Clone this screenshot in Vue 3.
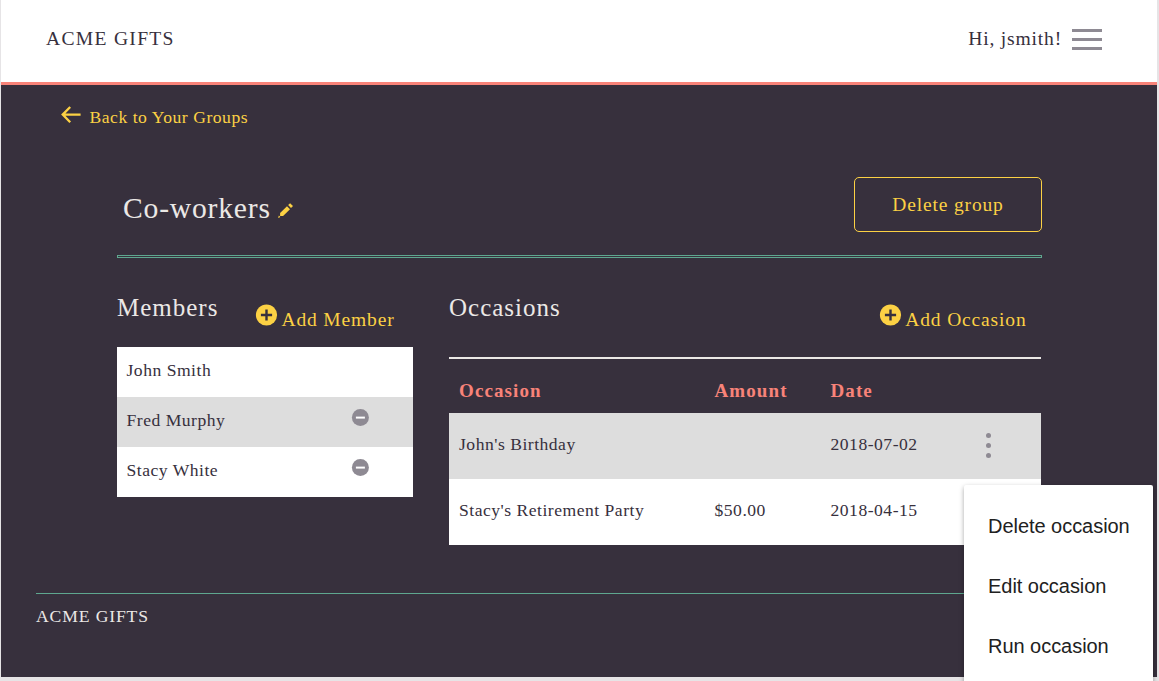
<script setup>
const members = [
  { name: 'John Smith', removable: false },
  { name: 'Fred Murphy', removable: true },
  { name: 'Stacy White', removable: true },
]
const occasions = [
  { name: "John's Birthday", amount: '', date: '2018-07-02' },
  { name: "Stacy's Retirement Party", amount: '$50.00', date: '2018-04-15' },
]
const actions = ['Delete occasion', 'Edit occasion', 'Run occasion']
</script>

<template>
  <div class="page">
    <header class="topbar">
      <span class="brand">ACME GIFTS</span>
      <div class="user">
        <span>Hi, jsmith!</span>
        <div class="burger"><i></i><i></i><i></i></div>
      </div>
    </header>

    <main class="main">
      <a class="back">
        <svg width="20" height="18" viewBox="0 0 20 18"><path d="M19.6 8.6H2M9.2 1 1.7 8.6l7.5 7.6" fill="none" stroke="currentColor" stroke-width="2.3" /></svg>
        <span>Back to Your Groups</span>
      </a>

      <div class="content">
        <div class="title-row">
          <h1>Co-workers</h1>
          <svg class="pencil" width="15" height="15" viewBox="0 0 15 15" fill="currentColor">
            <path d="M2.1 10 9 3.2 12 6.2 5.1 13H2.1ZM10.1 2.1 12.1.2 15 3.1 13 5ZM0 15 .9 12.6 2.4 14.1Z" />
          </svg>
          <button class="delete">Delete group</button>
        </div>
        <div class="double-rule"></div>

        <div class="columns">
          <section class="members">
            <div class="section-head">
              <h2>Members</h2>
              <a class="add">
                <svg width="22" height="22" viewBox="0 0 22 22"><circle cx="10.5" cy="11" r="10.6" fill="currentColor" /><path d="M10.5 5.4v11.2M4.9 11h11.2" stroke="#37303d" stroke-width="2.4" /></svg>
                <span>Add Member</span>
              </a>
            </div>
            <ul>
              <li v-for="m in members" :key="m.name">
                <span>{{ m.name }}</span>
                <svg v-if="m.removable" width="18" height="18" viewBox="0 0 18 18"><circle cx="9.4" cy="8.6" r="8.5" fill="#8e8a93" /><path d="M4.9 8.6h9" stroke="#fff" stroke-width="2" /></svg>
              </li>
            </ul>
          </section>

          <section class="occasions">
            <div class="section-head">
              <h2>Occasions</h2>
              <a class="add">
                <svg width="22" height="22" viewBox="0 0 22 22"><circle cx="10.5" cy="11" r="10.6" fill="currentColor" /><path d="M10.5 5.4v11.2M4.9 11h11.2" stroke="#37303d" stroke-width="2.4" /></svg>
                <span>Add Occasion</span>
              </a>
            </div>
            <div class="table">
              <div class="row head"><span>Occasion</span><span>Amount</span><span>Date</span></div>
              <div v-for="o in occasions" :key="o.name" class="row">
                <span>{{ o.name }}</span>
                <span>{{ o.amount }}</span>
                <span>{{ o.date }}</span>
                <div class="dots"><i></i><i></i><i></i></div>
              </div>
            </div>
          </section>
        </div>
      </div>

      <footer>ACME GIFTS</footer>
    </main>

    <div class="menu">
      <a v-for="a in actions" :key="a">{{ a }}</a>
    </div>
  </div>
</template>

<style>
body { margin: 0; background: #e6e4e6; overflow: hidden; }
</style>

<style scoped>
* { box-sizing: border-box; }
h1, h2, ul { margin: 0; padding: 0; font-weight: 400; list-style: none; }
svg, i { display: block; flex: none; }
svg { overflow: visible; }
span, a, h1, h2 { white-space: nowrap; }
.page {
  position: relative;
  height: 681px;
  padding: 0 2px 4px 1px;
  overflow: hidden;
  display: flex;
  flex-direction: column;
  font-family: "Liberation Serif", "Times New Roman", serif;
  font-size: 17.6px;
  letter-spacing: 0.5px;
  color: #37303d;
}
.topbar {
  height: 85px;
  flex: none;
  display: flex;
  justify-content: space-between;
  padding: 27px 55px 0 45px;
  background: #fff;
  border-bottom: 3px solid #f88379;
  font-size: 19.6px;
  line-height: 24px;
}
.brand { letter-spacing: 1.28px; }
.user { display: flex; gap: 10px; letter-spacing: 0.8px; }
.burger { width: 30px; padding-top: 1.5px; display: flex; flex-direction: column; gap: 6px; }
.burger i { height: 3px; background: #8e8a93; }
.main { flex: 1; background: #37303d; display: flex; flex-direction: column; }
.back { display: flex; gap: 8.5px; padding: 21px 0 0 60px; height: 92px; color: #fcd144; line-height: 22px; letter-spacing: 0.53px; }
.content { width: 925px; margin-left: 116px; height: 416px; }
.title-row { display: flex; height: 78px; padding-left: 6px; }
h1 { width: 148px; font-size: 29.6px; line-height: 34px; letter-spacing: 0.8px; padding-top: 14px; color: #ebe8e6; }
.pencil { margin: 26px 0 0 7px; color: #fcd144; }
.delete {
  margin-left: auto;
  width: 188px;
  height: 55px;
  padding: 0;
  border: 1px solid #fcd144;
  border-radius: 5px;
  background: none;
  color: #fcd144;
  font: inherit;
  font-size: 19.5px;
  letter-spacing: 0.85px;
}
.double-rule { height: 3px; border: 1px solid #5ea78f; }
.columns { display: flex; gap: 36px; padding-top: 35px; }
.members { width: 296px; }
.occasions { width: 592px; }
.section-head { display: flex; justify-content: space-between; height: 54px; }
h2 { font-size: 25px; line-height: 29px; letter-spacing: 1px; color: #ebe8e6; }
.add { display: flex; gap: 3px; padding-top: 11px; color: #fcd144; font-size: 19.5px; line-height: 31px; letter-spacing: 0.85px; }
.members .add { margin-right: 18.5px; }
.occasions .add { margin-right: 14.5px; }
li {
  display: flex;
  justify-content: space-between;
  height: 50px;
  padding: 12px 44px 0 9.5px;
  line-height: 22px;
  background: #fff;
}
li:nth-child(even) { background: #ddd; }
.table { margin-top: 10px; border-top: 2px solid #ebe8e6; }
.row {
  display: grid;
  grid-template-columns: 255.5px 116px 155.5px 1fr;
  height: 66px;
  padding: 20px 0 0 10px;
  line-height: 22px;
  background: #fff;
}
.row:nth-child(even) { background: #ddd; }
.row.head { height: 54px; background: none; color: #f88379; font-size: 19px; font-weight: 700; letter-spacing: 1.1px; padding-top: 21px; }
.dots { display: flex; flex-direction: column; gap: 5px; }
.dots i { width: 5px; height: 5px; border-radius: 50%; background: #8e8a93; }
footer {
  margin-left: 35px;
  margin-right: 35px;
  border-top: 1px solid #5ea78f;
  padding-top: 12px;
  line-height: 21px;
  letter-spacing: 0.88px;
  color: #ebe8e6;
}
.menu {
  position: absolute;
  left: 964px;
  top: 485px;
  width: 189px;
  height: 230px;
  padding-top: 11px;
  background: #fff;
  border-radius: 2px;
  box-shadow: 0 2px 5px rgba(0, 0, 0, 0.35);
  font: 20px/60px "Liberation Sans", Arial, sans-serif;
  letter-spacing: -0.04px;
  color: #212121;
}
.menu a { display: block; padding-left: 24px; }
</style>
